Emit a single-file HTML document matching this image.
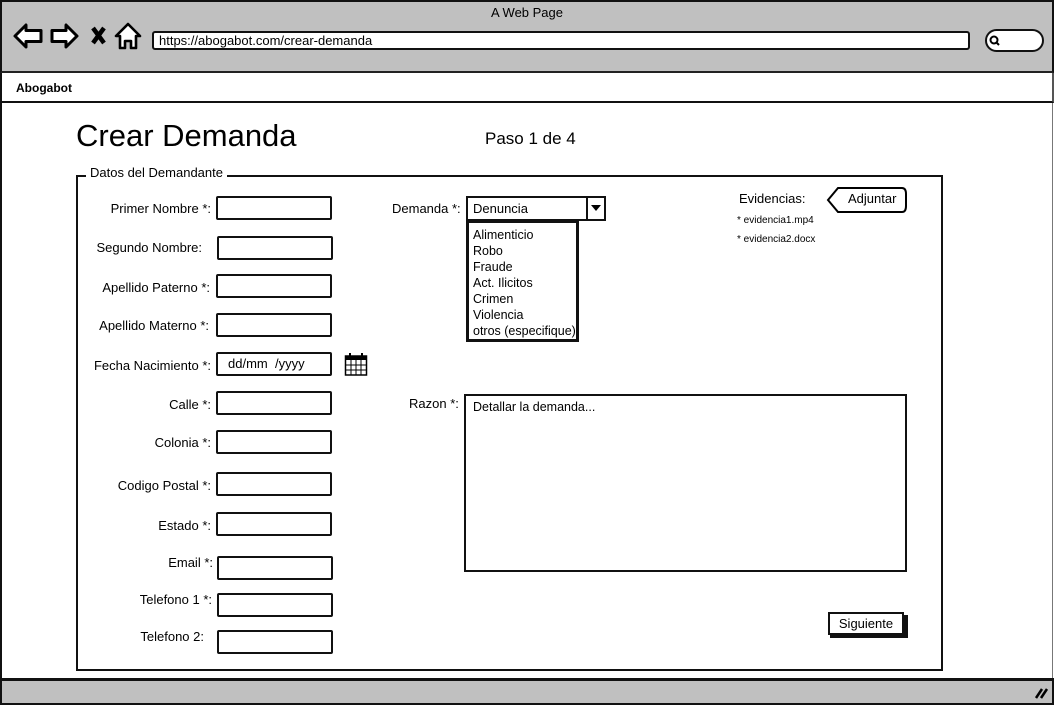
<!DOCTYPE html>
<html><head><meta charset="utf-8"><style>
*{box-sizing:border-box;margin:0;padding:0}
body{width:1054px;height:705px;position:relative;background:#fff;font-family:"Liberation Sans",sans-serif;color:#000;overflow:hidden;font-size:13px}
.a{position:absolute}
.top{left:0;top:0;width:1054px;height:73px;background:#c0c0c0;border:2px solid #111;border-bottom:2px solid #222}
.nav{left:0;top:73px;width:1054px;height:30px;border-bottom:2px solid #111;border-left:2px solid #111;border-right:2px solid #555}
.bot{left:0;top:678px;width:1054px;height:27px;background:#c0c0c0;border:2px solid #111;border-top:3px solid #111}
.side{left:0;top:103px;width:2px;height:576px;background:#111}
.sider{left:1052px;top:103px;width:1px;height:576px;background:#777}
.in{position:absolute;border:2px solid #111;border-radius:2px;background:#fff;width:116px;height:24px}
.lb{position:absolute;text-align:right;width:200px;font-size:13px}
.fs{left:76px;top:175px;width:867px;height:496px;border:2px solid #111}
</style></head><body>
<div class="a top"></div>
<div class="a" style="left:0;top:5px;width:1054px;text-align:center;font-size:13px">A Web Page</div>
<svg class="a" style="left:12px;top:22px" width="132" height="28" viewBox="0 0 132 28">
<path d="M3 14 L14 3 L14 8.5 L29 8.5 L29 19.5 L14 19.5 L14 25 Z" fill="#fff" stroke="#000" stroke-width="3" stroke-linejoin="round"/>
<path d="M65 14 L54 3 L54 8.5 L40 8.5 L40 19.5 L54 19.5 L54 25 Z" fill="#fff" stroke="#000" stroke-width="3" stroke-linejoin="round"/>
<path d="M81 6 L92 21 M92 6 L81 21" stroke="#000" stroke-width="4.5"/>
<path d="M116 2 L104 14 L108 14 L108 26 L113 26 L113 19 L119 19 L119 26 L124 26 L124 14 L128 14 Z" fill="#fff" stroke="#000" stroke-width="2.6" stroke-linejoin="round"/>
</svg>
<div class="a" style="left:152px;top:31px;width:818px;height:19px;background:#fff;border:2px solid #111;border-radius:3px;font-size:13px;padding-left:5px;line-height:15px">https://abogabot.com/crear-demanda</div>
<div class="a" style="left:985px;top:29px;width:59px;height:23px;background:#fff;border:2px solid #111;border-radius:12px"></div>
<svg class="a" style="left:988px;top:34px" width="16" height="14"><circle cx="6" cy="6" r="3.5" fill="none" stroke="#000" stroke-width="2"/><path d="M8 8 L11 11" stroke="#000" stroke-width="2"/></svg>
<div class="a nav"></div>
<div class="a" style="left:16px;top:81px;font-weight:bold;font-size:12px">Abogabot</div>
<div class="a side"></div><div class="a sider"></div>
<div class="a bot"></div>
<svg class="a" style="left:1033px;top:686px" width="16" height="14"><path d="M3 12 L9 3 M8 12 L14 3" stroke="#000" stroke-width="2.5"/></svg>

<div class="a" style="left:76px;top:118px;font-size:31px">Crear Demanda</div>
<div class="a" style="left:485px;top:129px;font-size:17px">Paso 1 de 4</div>
<div class="a fs"></div>
<div class="a" style="left:86px;top:165px;background:#fff;padding:0 4px;font-size:13px">Datos del Demandante</div>

<div class="lb" style="left:11px;top:201px">Primer Nombre *:</div><div class="in" style="left:216px;top:196px"></div>
<div class="lb" style="left:2px;top:240px">Segundo Nombre:</div><div class="in" style="left:217px;top:236px"></div>
<div class="lb" style="left:10px;top:280px">Apellido Paterno *:</div><div class="in" style="left:216px;top:274px"></div>
<div class="lb" style="left:9px;top:318px">Apellido Materno *:</div><div class="in" style="left:216px;top:313px"></div>
<div class="lb" style="left:11px;top:358px">Fecha Nacimiento *:</div><div class="in" style="left:216px;top:352px;padding-left:10px;line-height:20px">dd/mm &nbsp;/yyyy</div>
<svg class="a" style="left:344px;top:352px" width="24" height="25"><rect x="1.5" y="4" width="21" height="19" fill="#fff" stroke="#000" stroke-width="1.5"/><rect x="1.5" y="4" width="21" height="4" fill="#000"/><path d="M6 1v6M18 1v6" stroke="#000" stroke-width="2"/><path d="M2 13h20M2 18h20M7 8v15M12 8v15M17 8v15" stroke="#000" stroke-width="1"/></svg>
<div class="lb" style="left:11px;top:397px">Calle *:</div><div class="in" style="left:216px;top:391px"></div>
<div class="lb" style="left:11px;top:435px">Colonia *:</div><div class="in" style="left:216px;top:430px"></div>
<div class="lb" style="left:11px;top:478px">Codigo Postal *:</div><div class="in" style="left:216px;top:472px"></div>
<div class="lb" style="left:11px;top:518px">Estado *:</div><div class="in" style="left:216px;top:512px"></div>
<div class="lb" style="left:13px;top:555px">Email *:</div><div class="in" style="left:217px;top:556px"></div>
<div class="lb" style="left:12px;top:592px">Telefono 1 *:</div><div class="in" style="left:217px;top:593px"></div>
<div class="lb" style="left:4px;top:629px">Telefono 2:</div><div class="in" style="left:217px;top:630px"></div>

<div class="a" style="left:392px;top:201px">Demanda *:</div>
<div class="a" style="left:466px;top:196px;width:140px;height:25px;border:2px solid #111;background:#fff;padding-left:5px;line-height:21px">Denuncia</div>
<div class="a" style="left:586px;top:196px;width:20px;height:25px;border-left:2px solid #111"></div>
<svg class="a" style="left:590px;top:204px" width="12" height="8"><path d="M1 1h10L6 7z" fill="#000"/></svg>
<div class="a" style="left:466px;top:221px;width:113px;height:121px;border:3px solid #111;border-top:2px solid #111;background:#fff;padding:4px 0 0 4px;line-height:16px;font-size:12.5px">Alimenticio<br>Robo<br>Fraude<br>Act. Ilicitos<br>Crimen<br>Violencia<br>otros (especifique)</div>

<div class="a" style="left:739px;top:191px">Evidencias:</div>
<svg class="a" style="left:826px;top:186px" width="82" height="28"><path d="M12 2 H76 Q80 2 80 8 V20 Q80 26 76 26 H12 L2 14 Z" fill="#fff" stroke="#000" stroke-width="2"/></svg>
<div class="a" style="left:848px;top:191px">Adjuntar</div>
<div class="a" style="left:737px;top:215px;font-size:10px">* evidencia1.mp4</div>
<div class="a" style="left:737px;top:234px;font-size:10px">* evidencia2.docx</div>

<div class="a" style="left:409px;top:396px">Razon *:</div>
<div class="a" style="left:464px;top:394px;width:443px;height:178px;border:2px solid #111;padding:4px 0 0 7px;font-size:12.5px">Detallar la demanda...</div>

<div class="a" style="left:830px;top:615px;width:78px;height:23px;background:#111"></div>
<div class="a" style="left:828px;top:612px;width:76px;height:23px;background:#fff;border:2px solid #111;text-align:center;line-height:19px">Siguiente</div>
</body></html>
